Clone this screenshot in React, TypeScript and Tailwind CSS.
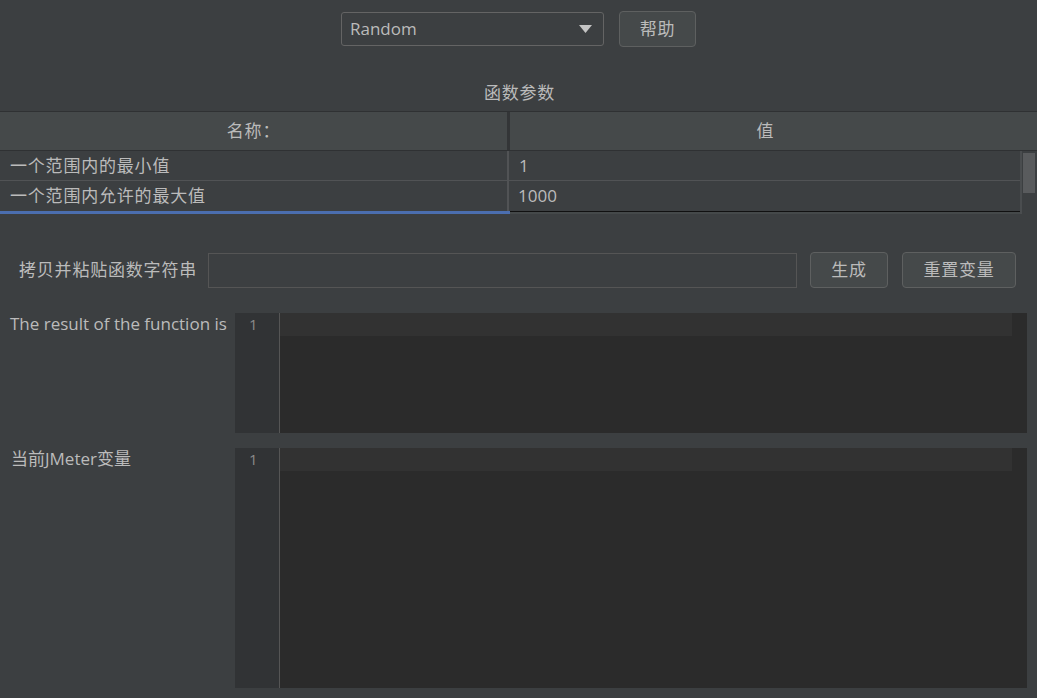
import React from "react";

const font = "font-['Open_Sans','Noto_Sans_CJK_SC',sans-serif]";

const Editor = ({ height }: { height: string }) => (
  <div className={`flex flex-1 ${height} bg-[#2b2b2b]`}>
    {/* gutter */}
    <div className="w-[45px] shrink-0 bg-[#313335] border-r border-[#555555] pl-[14px] text-[15px] leading-[22px] text-[#8a8a8a]">
      1
    </div>
    <div className="flex-1 flex">
      <div className="flex-1">
        <div className="h-[23px] bg-[#323232]" />
      </div>
      <div className="w-[15px] bg-[#2b2b2b]" />
    </div>
  </div>
);

const Button = ({ label, width }: { label: string; width: string }) => (
  <button
    className={`${width} h-[36px] rounded-[4px] border border-[#5e6060] bg-[#45494a] text-[17px] tracking-[0.8px] text-[#bbbbbb] flex items-center justify-center`}
  >
    {label}
  </button>
);

export default function App() {
  return (
    <div className={`w-[1037px] h-[698px] bg-[#3c3f41] text-[#bbbbbb] flex flex-col overflow-hidden ${font}`}>
      {/* Function selector */}
      <div className="h-[111px] flex flex-col">
        <div className="pt-[11px] flex justify-center items-center gap-[15px]">
          <div className="w-[263px] h-[34px] rounded-[3px] border border-[#646464] bg-[#3c3f41] flex items-center justify-between pl-[8px] pr-[11px]">
            <span className="text-[17px]">Random</span>
            <svg width="13" height="8" viewBox="0 0 13 8">
              <path d="M0 0 L13 0 L6.5 8 Z" fill="#c4c4c4" />
            </svg>
          </div>
          <Button label="帮助" width="w-[77px]" />
        </div>
        <div className="mt-[36px] text-center text-[17px] tracking-[0.8px] leading-[20px] pl-[2px]">
          函数参数
        </div>
      </div>

      {/* Parameters table */}
      <div className="h-[103px] flex flex-col border-t border-[#2f3133]">
        <div className="h-[39px] flex bg-[#45494a] border-b border-[#2f3133]">
          <div className="w-[509px] flex items-center justify-center text-[17px] tracking-[0.8px] border-r-2 border-[#333537]">
            名称：
          </div>
          <div className="flex-1 flex items-center justify-center pr-[17px] text-[17px] border-l border-[#333537]">值</div>
        </div>
        <div className="flex flex-1">
          <div className="flex-1 flex flex-col">
            <div className="h-[30px] flex border-b border-[#515355]">
              <div className="w-[509px] flex items-center pl-[10px] text-[17px] tracking-[0.8px] border-r-2 border-[#515355]">
                一个范围内的最小值
              </div>
              <div className="flex-1 flex items-center pl-[10px] text-[17px]">1</div>
            </div>
            <div className="h-[30px] flex">
              <div className="w-[509px] flex items-center pl-[10px] text-[17px] tracking-[0.8px] border-r-2 border-[#515355]">
                一个范围内允许的最大值
              </div>
              <div className="flex-1 flex items-center pl-[9px] text-[17px]">1000</div>
            </div>
            <div className="h-[3px] flex">
              <div className="w-[510px] bg-[#4b6eaf]" />
              <div className="flex-1 border-t border-[#111111] bg-[#45494a]" />
            </div>
          </div>
          {/* scrollbar */}
          <div className="w-[17px] border-l-2 border-[#4a4d4f] bg-[#3c3f41] pt-[2px] pl-[1px]">
            <div className="w-[12px] h-[40px] bg-[#595b5d]" />
          </div>
        </div>
      </div>

      {/* Function string */}
      <div className="mt-[38px] h-[36px] flex items-center pl-[19px] pr-[21px]">
        <span className="text-[17px] tracking-[0.8px] w-[189px]">拷贝并粘贴函数字符串</span>
        <div className="w-[590px] h-[35px] border border-[#555555] bg-[#3c3f41]" />
        <div className="ml-[13px]">
          <Button label="生成" width="w-[78px]" />
        </div>
        <div className="ml-[14px]">
          <Button label="重置变量" width="w-[114px]" />
        </div>
      </div>

      {/* Result */}
      <div className="mt-[25px] flex pr-[10px]">
        <div className="w-[235px] shrink-0 pl-[10px] text-[17px] leading-[22px]">
          The result of the function is
        </div>
        <Editor height="h-[120px]" />
      </div>

      {/* Variables */}
      <div className="mt-[15px] flex pr-[10px]">
        <div className="w-[235px] shrink-0 pl-[11px] text-[17px] leading-[22px]">
          当前JMeter变量
        </div>
        <Editor height="h-[240px]" />
      </div>
    </div>
  );
}
